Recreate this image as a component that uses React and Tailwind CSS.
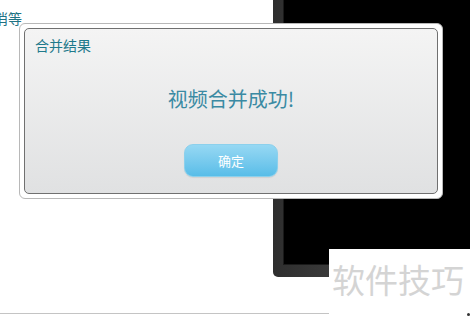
export default function App() {
  return (
    <div className="relative w-[470px] h-[320px] bg-white overflow-hidden flex flex-col" style={{ fontFamily: '"Noto Sans CJK SC", "Noto Sans", sans-serif' }}>
      {/* top-left partial text */}
      <div className="pt-[9px] ml-[-6px] text-[14px] leading-[18px] text-[#1f7384]">消等</div>

      {/* bottom line */}
      <div className="mt-auto mb-[6px] w-[330px] h-[1px] bg-[#c4c4c4]" />

      {/* black panel with dark frame */}
      <div className="absolute left-[273px] top-[-20px] w-[230px] h-[297px] rounded-bl-[5px] bg-gradient-to-r from-[#2e2e2e] via-[#474747] to-[#3c3c3c] pl-[10px] pb-[12px]">
        <div className="w-full h-full bg-black border-l border-b border-[#1a1a1a]" />
      </div>

      {/* watermark */}
      <div className="absolute left-[329px] top-[249px] w-[141px] h-[71px] bg-white">
        <div className="pl-[3px] pt-[10px] text-[33px] leading-[40px] text-[#d4d4d4]">软件技巧</div>
        <div className="absolute left-[138px] top-[64px] w-[3px] h-[3px] rounded-full bg-[#333]" />
      </div>

      {/* dialog */}
      <div className="absolute left-[19px] top-[23px] w-[424px] h-[176px] rounded-[6px] border border-[#b8b8b8] bg-white p-[4px]">
        <div className="w-full h-full rounded-[5px] border border-[#707070] bg-gradient-to-b from-[#f4f4f4] to-[#e0e1e2] flex flex-col">
          <div className="pl-[10px] pt-[7px] text-[14px] leading-[18px] text-[#1f7a8c]">合并结果</div>
          <div className="mt-[33px] text-center text-[20px] leading-[24px] text-[#3a8aa3]">视频合并成功!</div>
          <div className="mt-[33px] flex justify-center">
            <div className="w-[94px] h-[33px] rounded-[9px] border border-[#8cd0ec] bg-gradient-to-b from-[#96d8f3] to-[#58bde8] flex items-center justify-center text-[13px] text-white shadow-[0_1px_1px_rgba(0,0,0,0.08)]">
              确定
            </div>
          </div>
        </div>
      </div>
    </div>
  );
}
